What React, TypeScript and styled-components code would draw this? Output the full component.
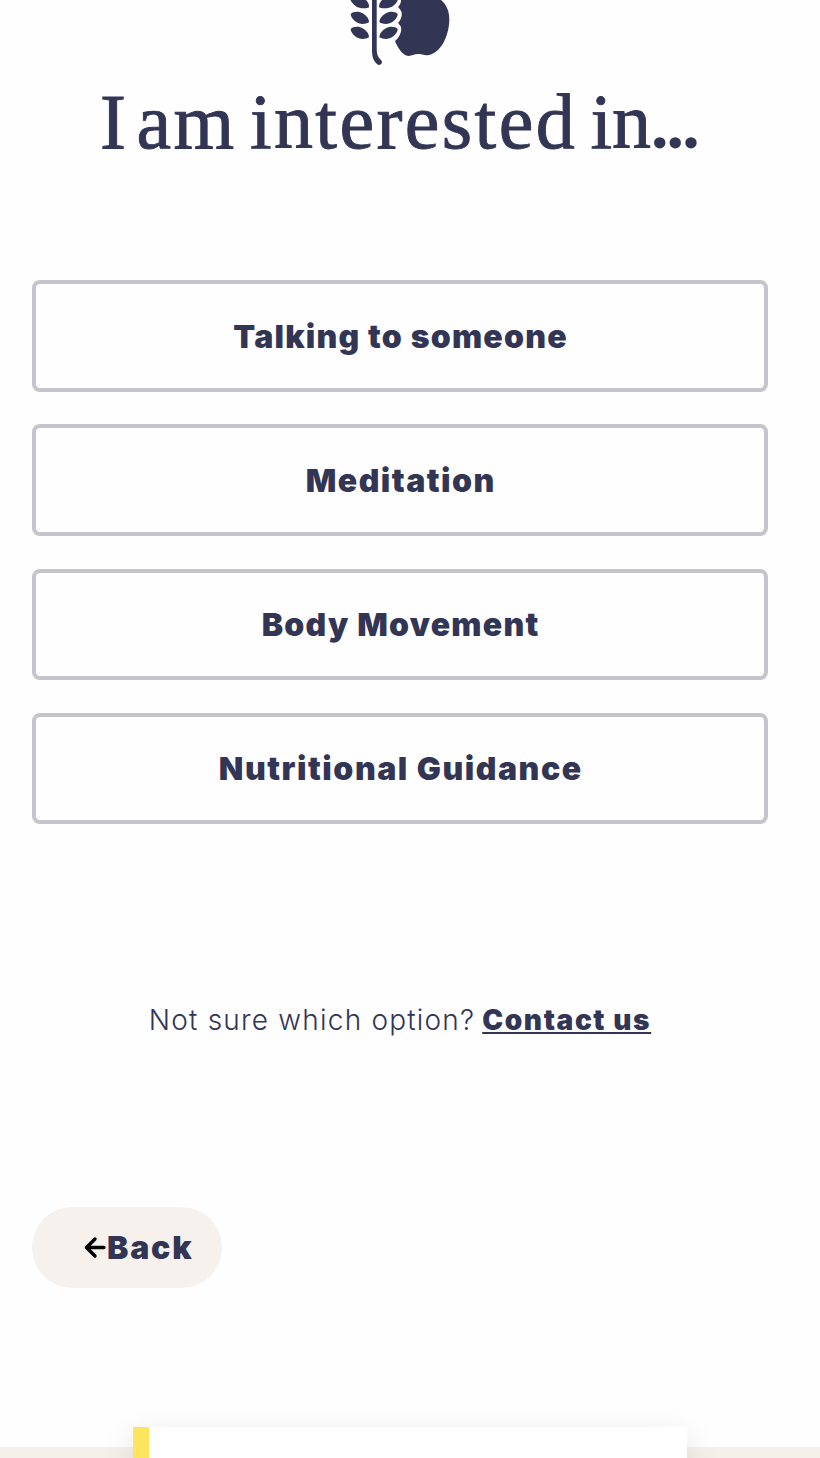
import React from 'react';
import styled, { createGlobalStyle } from 'styled-components';

const ink = '#333555';

const GlobalStyle = createGlobalStyle`
  *, *::before, *::after { box-sizing: border-box; }
  body { margin: 0; background: #fefefe; color: ${ink}; font-family: Inter, sans-serif; }
`;

const Page = styled.div`
  display: flex;
  flex-direction: column;
  height: 1458px;
  overflow: hidden;
`;

const Main = styled.main`
  display: flex;
  flex-direction: column;
  align-items: center;
  flex: none;
  width: 800px;
  height: 1427px;
  padding: 0 32px;
`;

const Logo = styled.svg`
  display: block;
  flex: none;
  width: 140px;
  height: 77px;
`;

const Title = styled.h1`
  margin: 0;
  height: 90px;
  padding-right: 2px;
  font: 400 78px/90px 'Liberation Serif', serif;
  word-spacing: -6px;
  -webkit-text-stroke: 0.9px ${ink};
  white-space: nowrap;
`;

const Word = styled.span<{ $spacing: number }>`
  letter-spacing: ${(p) => p.$spacing}px;
`;

const Dots = styled.span`
  font-size: 70px;
  font-weight: 700;
  letter-spacing: -1.8px;
  -webkit-text-stroke: 0;
`;

const Options = styled.div`
  display: flex;
  flex-direction: column;
  gap: 32.5px;
  width: 100%;
  margin-top: 113.2px;
`;

const Option = styled.button<{ $spacing: number }>`
  display: flex;
  align-items: center;
  justify-content: center;
  height: 111.7px;
  padding: 1px 0 0 ${(p) => p.$spacing}px;
  border: 4px solid #c5c4cd;
  border-radius: 8px;
  background: #fefefe;
  color: ${ink};
  font: 900 32px/40px Inter, sans-serif;
  letter-spacing: ${(p) => p.$spacing}px;
  white-space: nowrap;
`;

const Help = styled.p`
  display: flex;
  gap: 7px;
  margin: 175.3px 0 0;
  font-size: 28px;
  line-height: 40px;
  white-space: nowrap;
`;

const Question = styled.span`
  font-weight: 300;
  letter-spacing: 1.2px;
`;

const ContactLink = styled.a`
  color: ${ink};
  font-weight: 900;
  letter-spacing: 1.6px;
  text-decoration: underline;
  text-decoration-thickness: 2px;
  text-underline-offset: 2px;
  text-decoration-skip-ink: none;
`;

const BackButton = styled.button`
  display: flex;
  align-items: center;
  align-self: flex-start;
  width: 190px;
  height: 81px;
  margin-top: 167.5px;
  padding: 0 0 0 52px;
  border: 0;
  border-radius: 41px;
  background: #f7f1ed;
  color: ${ink};
  font: 900 32px/40px Inter, sans-serif;
  letter-spacing: 1.8px;
  white-space: nowrap;
`;

const Arrow = styled.svg`
  flex: none;
  width: 23px;
  height: 24px;
`;

const Footer = styled.footer`
  display: flex;
  flex: none;
  height: 31px;
  padding-left: 133px;
  background: linear-gradient(#fefefe 20px, #f5f1ea 20px);
`;

const Card = styled.section`
  width: 554px;
  height: 240px;
  border-left: 16px solid #fee45f;
  background: #fff;
  box-shadow: 0 10px 32px rgba(0, 0, 0, 0.11);
`;

const options = [
  { label: 'Talking to someone', spacing: 1.23 },
  { label: 'Meditation', spacing: 1.5 },
  { label: 'Body Movement', spacing: 1.25 },
  { label: 'Nutritional Guidance', spacing: 1.54 },
];

export default function App() {
  return (
    <Page>
      <GlobalStyle />
      <Main>
        <Logo viewBox="0 0 140 77" fill={ink} aria-hidden="true">
          <path d="M42 0H46.700V49C46.700 55 48.500 57.500 51.500 60.500C53 63 50.500 66 47.500 64.500C43 60.500 42 56 42 50Z" />
          <path d="M20.500 0H36C38.500 2.500 39.500 5 38.800 7.500C31 10 24 7 20.500 0Z" />
          <path d="M20.700 14C23 11.500 29 11 33 13.500C37 16 39.500 19.500 38.800 22.500C35 24.500 29 24.500 25.500 21.500C22.500 19 20.700 16.500 20.700 14Z" />
          <path d="M20.700 29C23 26.500 29 26 33 28.500C37 31 39.500 34.500 38.800 37.500C35 39.500 29 39.500 25.500 36.500C22.500 34 20.700 31.500 20.700 29Z" />
          <path d="M67.800 0H52C49.500 2.500 48.700 5 49.300 7.500C57 10 65 7 67.800 0Z" />
          <path d="M67.700 14C65.500 11.500 59.500 11 55.500 13.500C51.500 16 49 19.500 49.600 22.500C53.500 24.500 59.500 24.500 63 21.500C66 19 67.700 16.500 67.700 14Z" />
          <path d="M67.700 29C65.500 26.500 59.500 26 55.500 28.500C51.500 31 49 34.500 49.600 37.500C53.500 39.500 59.500 39.500 63 36.500C66 34 67.700 31.500 67.700 29Z" />
          <path d="M71 0H111C117 5 119.500 12 119.300 20C119 37 110 53 99 55C94 56 93 53.500 88 54C83 54 81 57 76 55.500C71 53 67 46 65 41C69 38 72 32 71 27C70 25 69 24 68 23C71 20 73 14 71 11C70 9 69 8 68 7C70 5 71 3 71 0Z" />
        </Logo>
        <Title>
          <Word $spacing={-3}>I</Word> <Word $spacing={2.3}>am</Word>{' '}
          <Word $spacing={2.4}>interested</Word> <Word $spacing={-0.2}>in</Word>
          <Dots>...</Dots>
        </Title>
        <Options>
          {options.map((o) => (
            <Option key={o.label} $spacing={o.spacing}>{o.label}</Option>
          ))}
        </Options>
        <Help>
          <Question>Not sure which option?</Question>
          <ContactLink>Contact us</ContactLink>
        </Help>
        <BackButton>
          <Arrow viewBox="0 0 23 24" fill="none" stroke="#000" strokeWidth="3.4" strokeLinecap="round" strokeLinejoin="round" aria-hidden="true">
            <path d="M20 11.500H3M11 3L2.500 11.500L11 20" />
          </Arrow>
          Back
        </BackButton>
      </Main>
      <Footer>
        <Card />
      </Footer>
    </Page>
  );
}
